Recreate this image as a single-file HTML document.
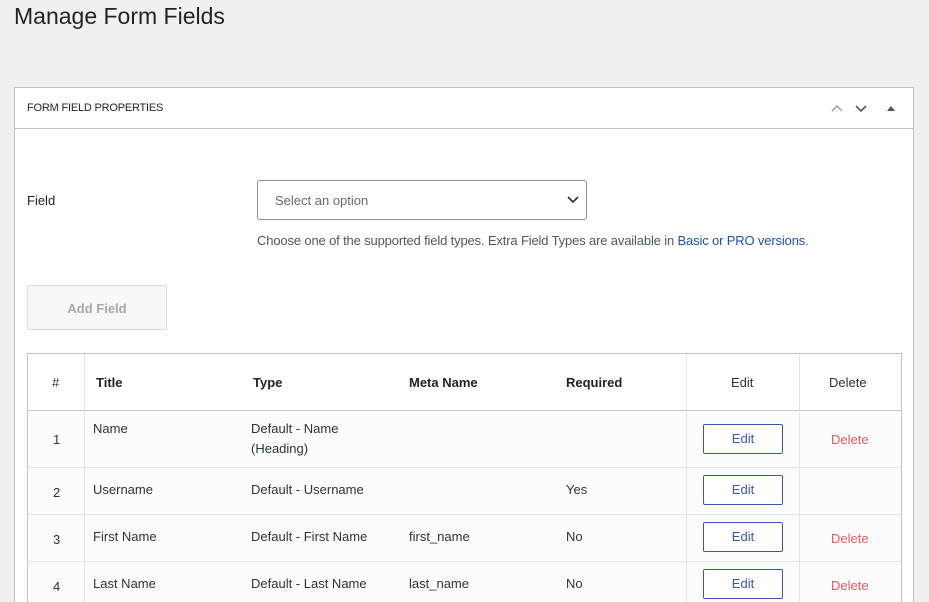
<!DOCTYPE html>
<html style="height:602px;overflow:hidden"><head><style>
body{margin:0;width:929px;height:602px;background:#f0f0f1;font-family:"Liberation Sans",sans-serif;color:#1d2327;position:relative;overflow:hidden}
.a{position:absolute}
h1{position:absolute;left:14px;top:1px;margin:0;font-weight:400;font-size:23px;line-height:30px;color:#1d2327}
.panel{left:14px;top:87px;width:898px;height:520px;background:#fff;border:1px solid #c3c4c7}
.hdr{left:0;top:0;width:898px;height:40px;border-bottom:1px solid #c3c4c7}
.cell{position:absolute;font-size:13px;line-height:20px;color:#2c3338}
.btn{position:absolute;width:78px;height:28px;border:1px solid #3858a8;border-radius:2px;color:#3858a8;font-size:13px;line-height:28px;text-align:center;background:#fff}
.del{position:absolute;color:#d63638;font-size:13px;opacity:.8}
.hl{position:absolute;left:0;width:873px;height:1px;background:#e5e5e5}
</style></head><body>
<h1>Manage Form Fields</h1>
<div class="a panel">
 <div class="a hdr"><div class="a" style="left:12px;top:14px;font-size:11px;letter-spacing:-.2px">FORM FIELD PROPERTIES</div>
  <svg class="a" style="left:814px;top:13px" width="70" height="14"><path d="M3 10 L8 5 L13 10" stroke="#a7aaad" stroke-width="1.6" fill="none"/><path d="M27 5 L32 10 L37 5" stroke="#50575e" stroke-width="1.6" fill="none"/><path d="M62 5 L66 10 L58 10Z" fill="#50575e"/></svg>
 </div>
 <div class="a" style="left:12px;top:105px;font-size:13px">Field</div>
 <div class="a" style="left:242px;top:92px;width:328px;height:38px;border:1px solid #8c8f94;border-radius:3px;background:#fff">
  <div class="a" style="left:17px;top:12px;font-size:13px;color:#646970">Select an option</div>
  <svg class="a" style="left:309px;top:14px" width="12" height="10"><path d="M1 2 L6 7 L11 2" stroke="#2c3338" stroke-width="1.6" fill="none"/></svg>
 </div>
 <div class="a" style="left:242px;top:145px;font-size:13px;color:#50575e;letter-spacing:-.15px">Choose one of the supported field types. Extra Field Types are available in <span style="color:#2251a8">Basic or PRO versions</span>.</div>
 <div class="a" style="left:12px;top:197px;width:138px;height:43px;border:1px solid #dcdcde;background:#f6f7f7;color:#a7aaad;font-size:13px;line-height:45px;text-align:center;font-weight:700;border-radius:2px">Add Field</div>
 <div class="a" style="left:12px;top:265px;width:873px;height:260px;border:1px solid #c3c4c7;background:#fcfcfc">
  <div class="a" style="left:0;top:0;width:873px;height:56px;background:#fff;border-bottom:1px solid #c3c4c7"></div>
  <div class="a" style="left:56px;top:0;width:1px;height:260px;background:#e5e5e5"></div>
  <div class="a" style="left:658px;top:0;width:1px;height:260px;background:#e5e5e5"></div>
  <div class="a" style="left:771px;top:0;width:1px;height:260px;background:#e5e5e5"></div>
  <div class="hl" style="top:113px"></div><div class="hl" style="top:160px"></div><div class="hl" style="top:207px"></div>
  <div class="cell" style="left:24px;top:19px">#</div>
  <div class="cell" style="left:68px;top:19px;font-weight:700;color:#1d2327">Title</div>
  <div class="cell" style="left:225px;top:19px;font-weight:700;color:#1d2327">Type</div>
  <div class="cell" style="left:381px;top:19px;font-weight:700;color:#1d2327">Meta Name</div>
  <div class="cell" style="left:538px;top:19px;font-weight:700;color:#1d2327">Required</div>
  <div class="cell" style="left:703px;top:19px">Edit</div>
  <div class="cell" style="left:801px;top:19px">Delete</div>
  <div class="cell" style="left:25px;top:76px">1</div><div class="cell" style="left:65px;top:65px">Name</div><div class="cell" style="left:223px;top:65px">Default - Name<br>(Heading)</div>
  <div class="btn" style="left:675px;top:70px">Edit</div><div class="del" style="left:803px;top:78px">Delete</div>
  <div class="cell" style="left:25px;top:129px">2</div><div class="cell" style="left:65px;top:126px">Username</div><div class="cell" style="left:223px;top:126px">Default - Username</div><div class="cell" style="left:538px;top:126px">Yes</div>
  <div class="btn" style="left:675px;top:121px">Edit</div>
  <div class="cell" style="left:25px;top:176px">3</div><div class="cell" style="left:65px;top:173px">First Name</div><div class="cell" style="left:223px;top:173px">Default - First Name</div><div class="cell" style="left:381px;top:173px">first_name</div><div class="cell" style="left:538px;top:173px">No</div>
  <div class="btn" style="left:675px;top:168px">Edit</div><div class="del" style="left:803px;top:177px">Delete</div>
  <div class="cell" style="left:25px;top:223px">4</div><div class="cell" style="left:65px;top:220px">Last Name</div><div class="cell" style="left:223px;top:220px">Default - Last Name</div><div class="cell" style="left:381px;top:220px">last_name</div><div class="cell" style="left:538px;top:220px">No</div>
  <div class="btn" style="left:675px;top:215px">Edit</div><div class="del" style="left:803px;top:224px">Delete</div>
 </div>
</div>
</body></html>
